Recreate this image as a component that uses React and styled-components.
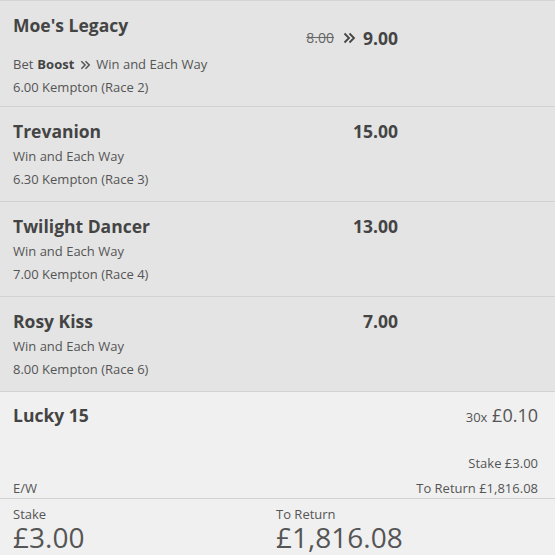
import React from "react";
import styled, { createGlobalStyle } from "styled-components";

const GlobalStyle = createGlobalStyle`
  html, body {
    margin: 0;
    padding: 0;
    background: #f0f0f0;
  }
  body {
    font-family: "Open Sans", "Noto Sans", "Liberation Sans", sans-serif;
    color: #444;
  }
`;

const selections = [
  {
    name: "Moe's Legacy",
    boost: true,
    was: "8.00",
    price: "9.00",
    market: "Win and Each Way",
    race: "6.00 Kempton (Race 2)",
  },
  {
    name: "Trevanion",
    price: "15.00",
    market: "Win and Each Way",
    race: "6.30 Kempton (Race 3)",
  },
  {
    name: "Twilight Dancer",
    price: "13.00",
    market: "Win and Each Way",
    race: "7.00 Kempton (Race 4)",
  },
  {
    name: "Rosy Kiss",
    price: "7.00",
    market: "Win and Each Way",
    race: "8.00 Kempton (Race 6)",
  },
];

function Chevrons() {
  return (
    <svg width="13" height="12" viewBox="0 0 13 12">
      <path
        d="M1.5 1.5 L6 6 L1.5 10.5 M6.5 1.5 L11 6 L6.5 10.5"
        fill="none"
        stroke="currentColor"
        strokeWidth="1.8"
      />
    </svg>
  );
}

export default function App() {
  return (
    <>
      <GlobalStyle />
      <Slip>
        {selections.map((s) => (
          <Selection key={s.name}>
            <Top boost={s.boost}>
              <Name>{s.name}</Name>
              <Price boost={s.boost}>
                {s.was && <Was>{s.was}</Was>}
                {s.boost && <Chevrons />}
                <strong>{s.price}</strong>
              </Price>
            </Top>
            <Detail>
              {s.boost && (
                <>
                  Bet <b>Boost</b>
                  <SmallChevron>
                    <Chevrons />
                  </SmallChevron>
                </>
              )}
              {s.market}
            </Detail>
            <Detail>{s.race}</Detail>
          </Selection>
        ))}

        <Multiple>
          <MultiTop>
            <Name>Lucky 15</Name>
            <UnitStake>
              <small>30x</small> £0.10
            </UnitStake>
          </MultiTop>
          <MultiBottom>
            <Detail>E/W</Detail>
            <Summary>
              <Detail>Stake £3.00</Detail>
              <Detail>To Return £1,816.08</Detail>
            </Summary>
          </MultiBottom>
        </Multiple>

        <Totals>
          <Total>
            <label>Stake</label>
            <span>£3.00</span>
          </Total>
          <Total>
            <label>To Return</label>
            <span>£1,816.08</span>
          </Total>
        </Totals>
      </Slip>
    </>
  );
}

const Slip = styled.div`
  width: 555px;
  height: 555px;
  overflow: hidden;
  display: flex;
  flex-direction: column;
  background: #f0f0f0;
  border-top: 1px solid #d4d4d4;
`;

const Selection = styled.div`
  flex-shrink: 0;
  background: #e4e4e4;
  border-bottom: 1px solid #d2d2d2;
  padding: 11px 157px 10px 13px;
  display: flex;
  flex-direction: column;
  &:first-child {
    padding-top: 11px;
    padding-bottom: 7px;
  }
`;

const Top = styled.div`
  display: flex;
  justify-content: space-between;
  align-items: flex-start;
  margin-bottom: ${(p) => (p.boost ? "2px" : "1px")};
`;

const Name = styled.div`
  font-size: 17.5px;
  font-weight: 700;
  color: #444;
  line-height: 26px;
`;

const Price = styled.div`
  display: flex;
  align-items: center;
  gap: 7px;
  margin-top: ${(p) => (p.boost ? "13px" : "0")};
  color: #444;
  line-height: 26px;
  strong {
    font-size: 17.5px;
    font-weight: 700;
  }
`;

const Was = styled.span`
  font-size: 14px;
  color: #666;
  text-decoration: line-through;
  margin-right: 2px;
`;

const SmallChevron = styled.span`
  display: inline-flex;
  margin: 0 5px 0 6px;
  svg {
    width: 11px;
    height: 10px;
  }
`;

const Detail = styled.div`
  font-size: 13px;
  line-height: 23px;
  color: #555;
  display: flex;
  align-items: center;
  b {
    font-weight: 700;
    color: #444;
    margin-left: 4px;
  }
`;

const Multiple = styled.div`
  flex-shrink: 0;
  padding: 10px 17px 0 13px;
  display: flex;
  flex-direction: column;
  border-bottom: 1px solid #d2d2d2;
`;

const MultiTop = styled.div`
  display: flex;
  justify-content: space-between;
  align-items: flex-start;
  height: 51px;
`;

const UnitStake = styled.div`
  font-size: 18px;
  line-height: 26px;
  color: #555;
  small {
    font-size: 13px;
  }
`;

const MultiBottom = styled.div`
  display: flex;
  justify-content: space-between;
  align-items: flex-end;
  ${Detail} {
    line-height: 20px;
  }
`;

const Summary = styled.div`
  display: flex;
  flex-direction: column;
  align-items: flex-end;
  gap: 5px;
`;

const Totals = styled.div`
  display: grid;
  grid-template-columns: 263px 1fr;
  padding: 7px 13px 0;
`;

const Total = styled.div`
  display: flex;
  flex-direction: column;
  color: #555;
  label {
    font-size: 13px;
    line-height: 16px;
  }
  span {
    font-size: 28px;
    line-height: 31px;
    font-weight: 400;
  }
`;
